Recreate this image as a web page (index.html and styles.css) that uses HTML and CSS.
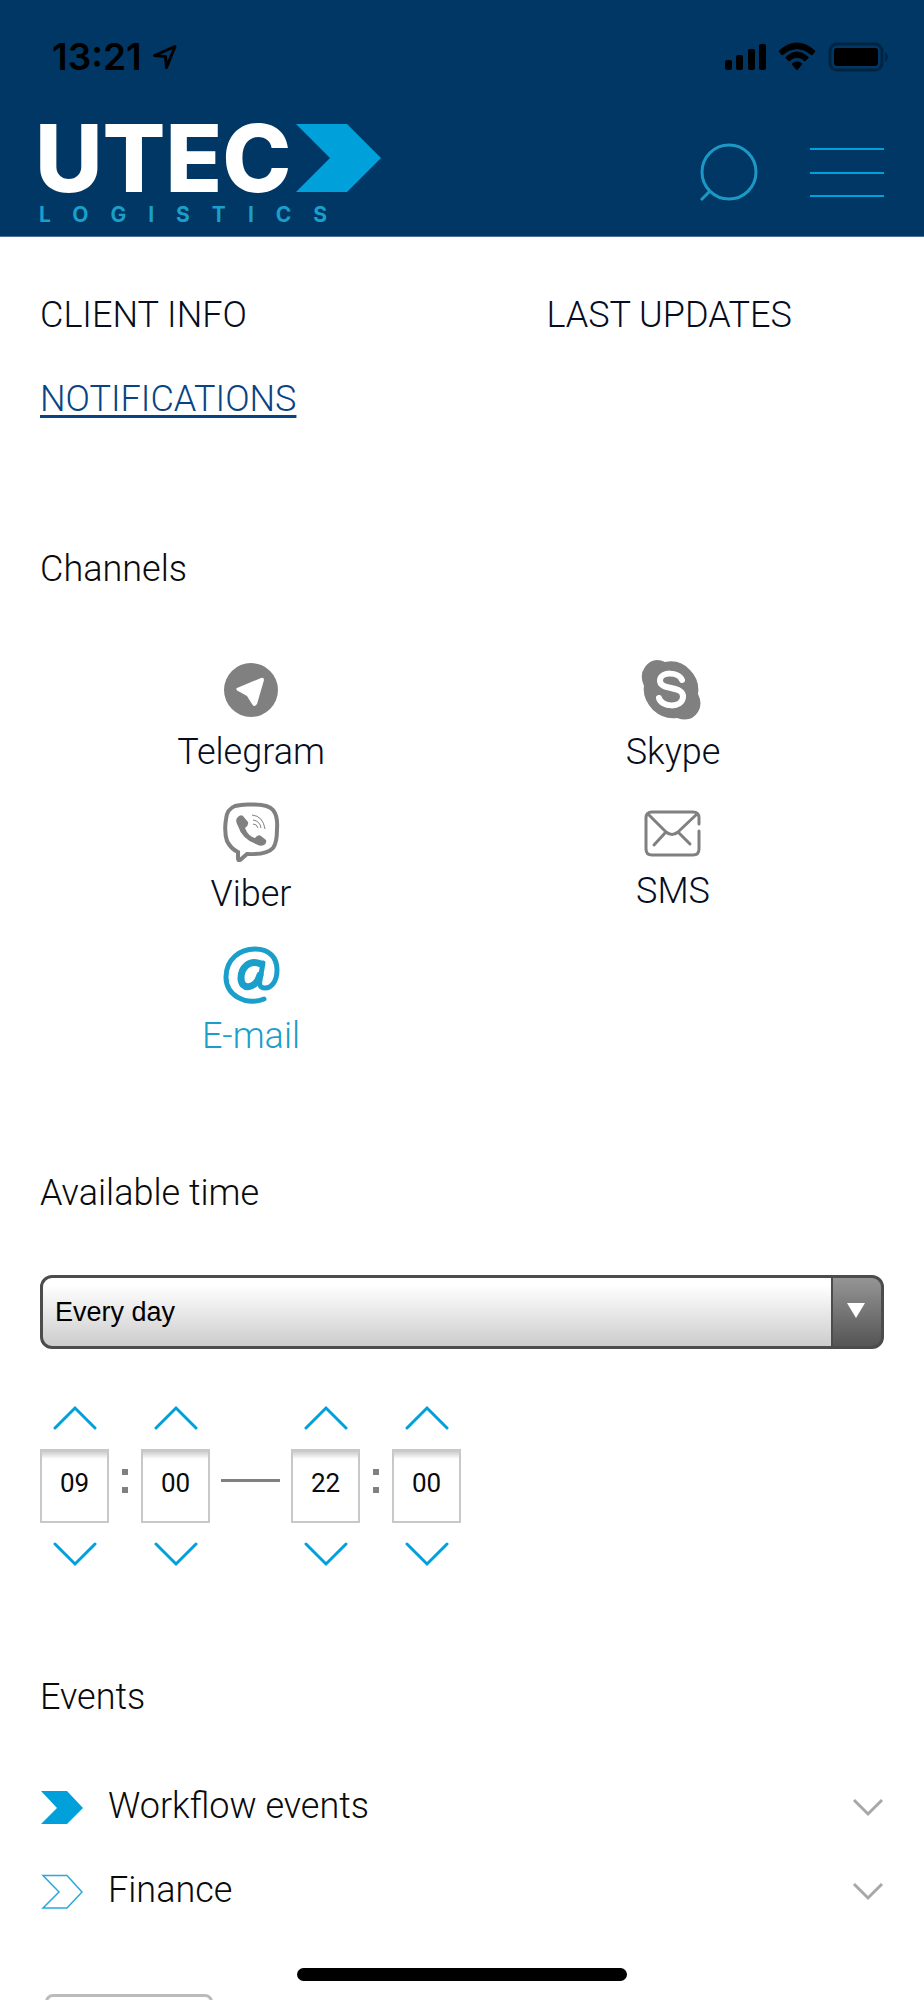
FILE: index.html
```html
<!DOCTYPE html>
<html lang="en">
<head>
<meta charset="utf-8">
<meta name="viewport" content="width=device-width, initial-scale=1">
<title>UTEC Logistics – Notifications</title>
<link rel="stylesheet" href="styles.css">
</head>
<body>
<div class="app">
  <header class="header">
    <div class="status">
      <div class="status-time">
        <span>13:21</span>
        <svg width="26" height="26" viewBox="0 0 26 26" aria-hidden="true"><path d="M2.500 11.500 23 2.500 14.500 23.500 13.500 12.500Z" fill="none" stroke="#000" stroke-width="3" stroke-linejoin="round"/></svg>
      </div>
      <svg width="166" height="30" viewBox="0 0 166 30" aria-hidden="true">
        <rect x="1" y="18" width="7" height="10" rx="2"/><rect x="12" y="13" width="7" height="15" rx="2"/><rect x="24" y="7" width="7" height="21" rx="2"/><rect x="35" y="2" width="7" height="26" rx="2"/>
        <path d="M55 9Q73-7 91 9L88 13Q73 0 58 13ZM61.500 15.500Q73 4.500 84.500 15.500L81 19Q73 11.500 65 19ZM68 22Q73 17.500 78 22L73 28Z" stroke="#000" stroke-linejoin="round"/>
        <rect x="106" y="2" width="52" height="26" rx="7" fill="none" stroke="#002440" stroke-width="3"/>
        <rect x="110" y="6" width="44" height="18" rx="3"/><path d="M161 10Q167 15 161 20Z" fill="#002440"/>
      </svg>
    </div>
    <div class="brand-row">
      <a class="logo" href="#" aria-label="UTEC Logistics">
        <svg width="342" height="100" viewBox="0 0 342 100">
          <text class="logo-name" x="-5" y="68">UTEC</text>
          <path d="M256 0H307L341 34 307 68H256L290 34Z" fill="#00a1db"/>
          <text class="logo-sub" x="-1" y="98">LOGISTICS</text>
        </svg>
      </a>
      <div class="tools">
        <button class="icon-button" aria-label="Search"><svg width="58" height="60" viewBox="0 0 58 60"><circle cx="29" cy="29" r="27" fill="none" stroke="#1c98c4" stroke-width="3"/><path d="M10 48 1 57" stroke="#1c98c4" stroke-width="3"/></svg></button>
        <button class="icon-button" aria-label="Menu"><svg width="74" height="50" viewBox="0 0 74 50"><path d="M0 1H74M0 25H74M0 48H74" stroke="#00a1db" stroke-width="2"/></svg></button>
      </div>
    </div>
  </header>

  <main class="content">
    <nav class="tabs">
      <a href="#">CLIENT INFO</a>
      <a href="#">LAST UPDATES</a>
      <a href="#" class="active" aria-current="page">NOTIFICATIONS</a>
    </nav>

    <section class="channels-section">
      <h2>Channels</h2>
      <div class="channels">
        <button class="channel">
          <svg width="60" height="60" viewBox="0 0 60 60"><circle cx="30" cy="30" r="27" fill="#808080"/><path d="M16 28 40 18Q43 17 43 20L36 44Q33 48 31 44L26 36 17 31Q14 29 16 28Z" fill="#fff"/></svg>
          <span>Telegram</span>
        </button>
        <button class="channel">
          <svg width="64" height="60" viewBox="0 0 64 60"><path d="M16 0Q20 0 24 2Q39-1 49 10Q59 20 57 34Q62 44 57 52Q50 63 36 58Q23 60 12 50Q1 38 3 26Q-2 15 4 7Q9 0 16 0Z" fill="#808080"/><path d="M41 20C38 12 20 11 19 20C18 31 43 25 42 37C41 49 20 47 18 38" fill="none" stroke="#fff" stroke-width="6" stroke-linecap="round"/></svg>
          <span>Skype</span>
        </button>
        <button class="channel">
          <svg width="60" height="60" viewBox="0 0 60 60"><path d="M30 2.500Q47 2 52 8Q57 14 56 27Q56 41 52 46Q46 53 26 52L19 58Q17 59 17 56V50Q10 47 6 39Q3 30 5 17Q6 7 14 4Q21 2 30 2.500Z" fill="none" stroke="#808080" stroke-width="4"/><path d="M16 16Q19 12 22 14L27 20Q28 23 24 26Q27 34 34 36Q37 32 40 34L45 38Q46 41 43 43Q39 45 35 42Q21 37 17 24Q14 19 16 16Z" fill="#808080"/><path d="M31 13Q42 14 44 27M32 18Q39 19 40 26M32 22Q36 22 37 26" fill="none" stroke="#808080"/></svg>
          <span>Viber</span>
        </button>
        <button class="channel">
          <svg width="64" height="57" viewBox="0 -4 64 57"><g fill="none" stroke="#808080" stroke-width="3" stroke-linecap="round"><path d="M58 18V12Q58 6 52 6H11Q5 6 5 12V43Q5 49 11 49H52Q58 49 58 43V25"/><path d="M7 8 25 26Q31 31 37 26L56 8M24 27 13 39M38 27 49 38"/></g></svg>
          <span>SMS</span>
        </button>
        <button class="channel selected">
          <svg width="60" height="60" viewBox="0 0 60 60"><g fill="none" stroke="#1a9fcb" stroke-width="5" stroke-linecap="round"><path d="M43 55C24 62 5 51 5 33C5 15 19 5 34 5C49 5 56 14 56 26C56 38 50 44 44 44C39 44 38 41 39 36L42 19"/><path d="M40 20C28 15 20 24 20 34C20 47 35 45 39 31" stroke-width="7"/></g></svg>
          <span>E-mail</span>
        </button>
      </div>
    </section>

    <section class="time-section">
      <h2><label for="days">Available time</label></h2>
      <div class="select-box">
        <select id="days"><option>Every day</option></select>
        <span class="select-arrow" aria-hidden="true"></span>
      </div>
      <div class="times">
        <div class="spinner">
          <button aria-label="Start hour up"><svg width="44" height="26" viewBox="0 0 44 26"><path d="M2 23 22 3 42 23"/></svg></button>
          <input value="09" aria-label="Start hour">
          <button aria-label="Start hour down"><svg width="44" height="26" viewBox="0 0 44 26"><path d="M2 3 22 23 42 3"/></svg></button>
        </div>
        <span class="colon"></span>
        <div class="spinner">
          <button aria-label="Start minute up"><svg width="44" height="26" viewBox="0 0 44 26"><path d="M2 23 22 3 42 23"/></svg></button>
          <input value="00" aria-label="Start minute">
          <button aria-label="Start minute down"><svg width="44" height="26" viewBox="0 0 44 26"><path d="M2 3 22 23 42 3"/></svg></button>
        </div>
        <span class="dash"></span>
        <div class="spinner">
          <button aria-label="End hour up"><svg width="44" height="26" viewBox="0 0 44 26"><path d="M2 23 22 3 42 23"/></svg></button>
          <input value="22" aria-label="End hour">
          <button aria-label="End hour down"><svg width="44" height="26" viewBox="0 0 44 26"><path d="M2 3 22 23 42 3"/></svg></button>
        </div>
        <span class="colon"></span>
        <div class="spinner">
          <button aria-label="End minute up"><svg width="44" height="26" viewBox="0 0 44 26"><path d="M2 23 22 3 42 23"/></svg></button>
          <input value="00" aria-label="End minute">
          <button aria-label="End minute down"><svg width="44" height="26" viewBox="0 0 44 26"><path d="M2 3 22 23 42 3"/></svg></button>
        </div>
      </div>
    </section>

    <section class="events-section">
      <h2>Events</h2>
      <div class="events">
        <button class="event">
          <svg width="44" height="36" viewBox="0 0 44 36"><path d="M1 1H27L43 18 27 34H1L17 18Z" fill="#00a1db"/></svg>
          <span>Workflow events</span>
          <svg width="32" height="20" viewBox="0 0 32 20"><path d="M2 2 16 16 30 2" fill="none" stroke="#a8a8a8" stroke-width="3"/></svg>
        </button>
        <button class="event">
          <svg width="44" height="36" viewBox="0 0 44 36"><path d="M3 1.500H27L42 18 27 34H3L19 18Z" fill="none" stroke="#2ba9dc" stroke-width="1.500"/></svg>
          <span>Finance</span>
          <svg width="32" height="20" viewBox="0 0 32 20"><path d="M2 2 16 16 30 2" fill="none" stroke="#a8a8a8" stroke-width="3"/></svg>
        </button>
      </div>
    </section>
    <button class="save" aria-label="Save"></button>
  </main>
  <div class="home-indicator"></div>
</div>
</body>
</html>
```
FILE: styles.css
```css
* { box-sizing: border-box; }

body {
  margin: 0;
  background: #fff;
  color: #0a0a0a;
  font-family: Roboto, "Noto Sans", sans-serif;
  font-size: 36px;
  font-weight: 300;
  line-height: 44px;
}

button {
  padding: 0;
  border: 0;
  background: none;
  color: inherit;
  font: inherit;
}

svg { display: block; flex: none; }
h2 { margin: 0; font-size: 36px; font-weight: 300; }

.app {
  height: 100vh;
  overflow-y: auto;
  scrollbar-width: none;
}

.header {
  padding: 42px 40px 12px;
  border-bottom: 1px solid #4d7093;
  background: #003764;
}

.status {
  display: flex;
  justify-content: space-between;
  align-items: center;
  height: 30px;
  padding-left: 12px;
  margin-right: -6px;
}

.status-time {
  display: flex;
  align-items: center;
  gap: 10px;
  color: #000;
  font-family: Inter, sans-serif;
  font-size: 37px;
  font-weight: 600;
}

.brand-row {
  display: flex;
  justify-content: space-between;
  align-items: flex-start;
  margin-top: 52px;
}

.logo svg { overflow: visible; }
.logo-name { fill: #fff; font: 800 93px Inter, sans-serif; }
.logo-sub { fill: #1a9fcb; font: 700 21px Inter, sans-serif; letter-spacing: 22px; }

.tools {
  display: flex;
  align-items: center;
  gap: 52px;
  margin-top: 19px;
}

.content { padding: 56px 40px 40px; }

.tabs {
  display: grid;
  grid-template-columns: 3fr 2fr;
  row-gap: 40px;
}

.tabs a { color: #060d20; text-decoration: none; }
.tabs a.active {
  color: #084484;
  text-decoration: underline;
  text-decoration-thickness: 3px;
  text-underline-offset: 4px;
}

.channels-section { margin-top: 126px; }

.channels {
  display: grid;
  grid-template-columns: 1fr 1fr;
  row-gap: 28px;
  margin-top: 69px;
}

.channel {
  display: flex;
  flex-direction: column;
  align-items: center;
  justify-content: flex-start;
  gap: 10px;
  color: #060d20;
}

.channel.selected { color: #1a9fcb; }

.time-section { margin-top: 113px; }

.select-box { position: relative; margin-top: 60px; }

.select-box select {
  display: block;
  width: 100%;
  height: 74px;
  padding: 0 64px 0 12px;
  border: 3px solid #4c4c4c;
  border-radius: 12px;
  appearance: none;
  background:
    linear-gradient(#4c4c4c, #4c4c4c) right 48px top / 2px 100% no-repeat,
    linear-gradient(#959595, #555) right top / 48px 100% no-repeat,
    linear-gradient(#fff 10%, #ccc);
  color: #000;
  font: 27px "Liberation Sans", sans-serif;
}

.select-arrow {
  position: absolute;
  top: 28px;
  right: 19px;
  width: 18px;
  height: 15px;
  background: #fff;
  clip-path: polygon(0 0, 100% 0, 50% 100%);
  pointer-events: none;
}

.times {
  display: flex;
  align-items: center;
  margin-top: 56px;
}

.spinner {
  display: flex;
  flex-direction: column;
  align-items: center;
  gap: 18px;
}

.spinner path {
  fill: none;
  stroke: #00a1db;
  stroke-width: 3;
  stroke-linecap: round;
}

.spinner input {
  width: 69px;
  height: 74px;
  padding: 0 0 6px;
  border: 2px solid #c8c8c8;
  border-radius: 0;
  background: linear-gradient(#c8c8c8, #fff 8px);
  color: #0a0a0a;
  font: 400 26px Roboto, sans-serif;
  text-align: center;
}

.colon {
  width: 6px;
  height: 24px;
  margin: 0 13px;
  margin-bottom: 10px;
  border-top: 6px solid #808080;
  border-bottom: 6px solid #808080;
}

.dash {
  width: 59px;
  height: 3px;
  margin: 0 11px;
  margin-bottom: 12px;
  background: #808080;
}

.events-section { margin-top: 108px; }

.events {
  display: grid;
  row-gap: 40px;
  margin-top: 65px;
}

.event {
  display: flex;
  align-items: center;
  gap: 24px;
  text-align: left;
}

.event span { flex: 1; }
.event svg { margin-top: 4px; }

.save {
  display: block;
  width: 168px;
  height: 68px;
  margin: 82px 0 0 5px;
  border: 3px solid #bbb;
  border-radius: 8px;
}

.home-indicator {
  position: fixed;
  bottom: 19px;
  left: 50%;
  width: 330px;
  height: 13px;
  margin-left: -165px;
  border-radius: 7px;
  background: #000;
}
```
